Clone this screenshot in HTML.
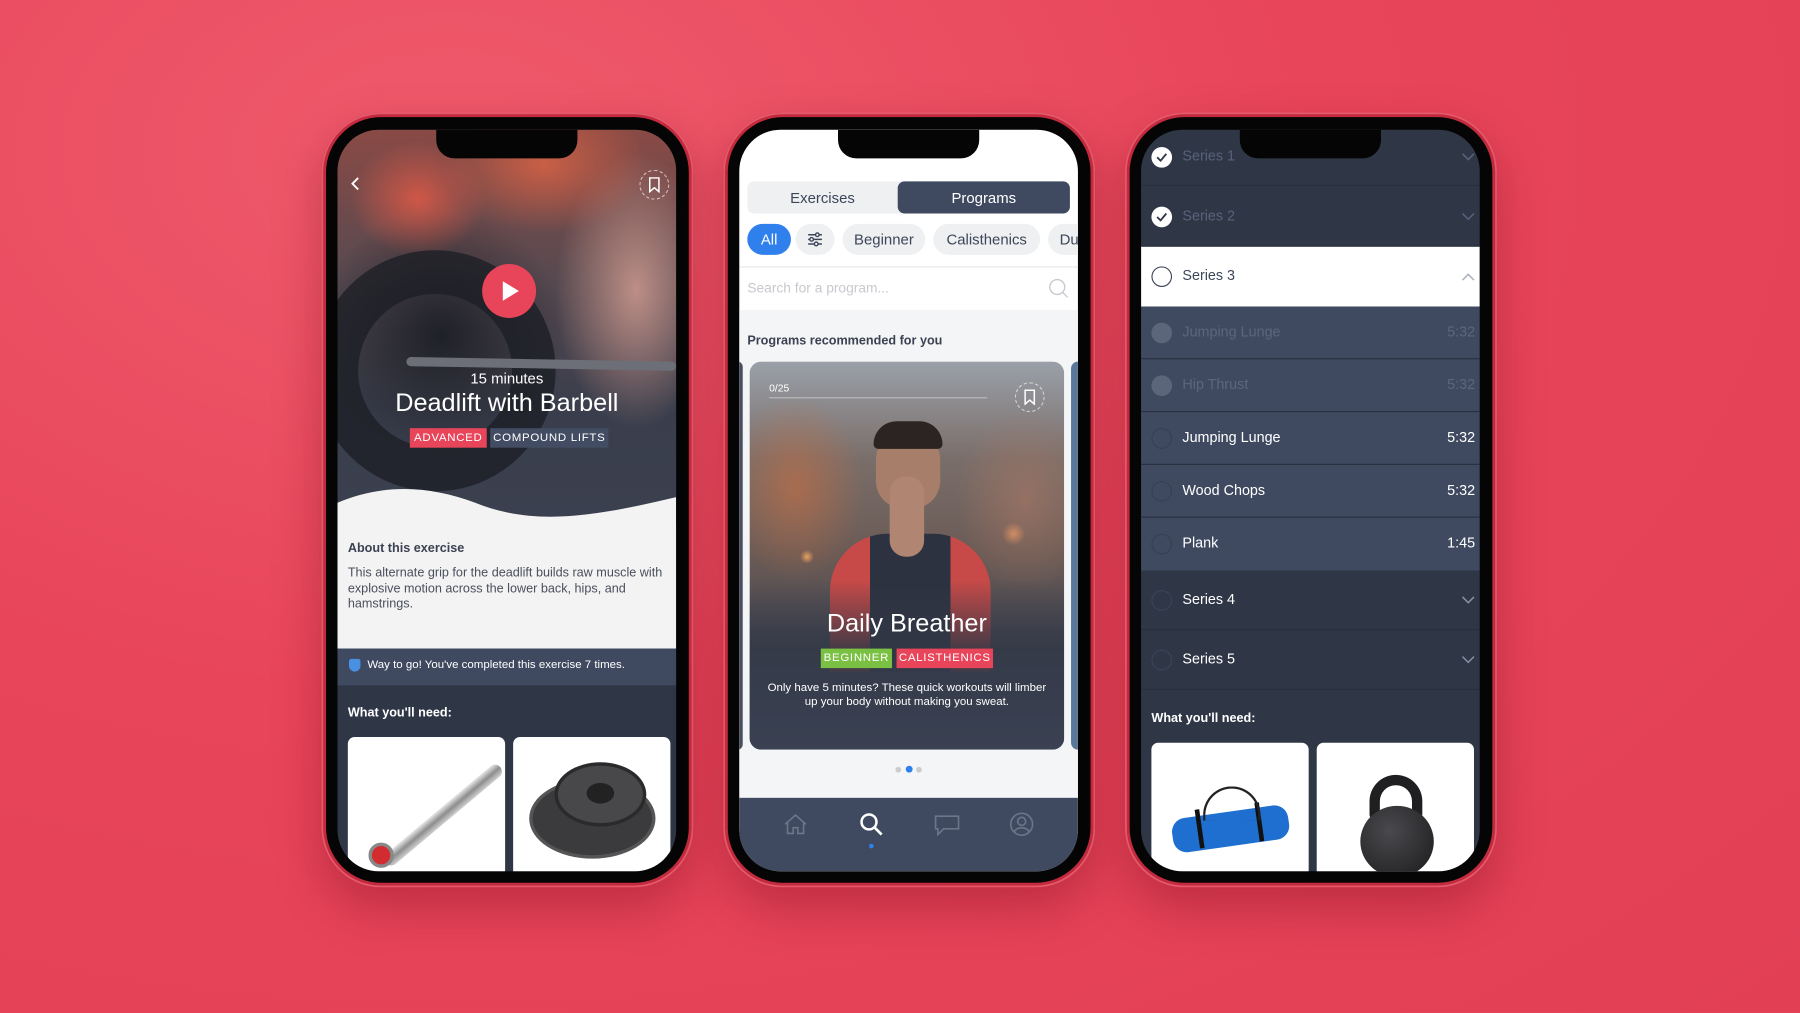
<!DOCTYPE html>
<html><head><meta charset="utf-8"><style>
*{margin:0;padding:0;box-sizing:border-box}
html,body{width:1800px;height:1013px;overflow:hidden;background:#e8435a}
body{font-family:"Liberation Sans",sans-serif}
#s{position:absolute;left:0;top:0;width:1568px;height:882px;transform:scale(1.14796);transform-origin:0 0;background:radial-gradient(ellipse at 25% 15%,#ef5a6c 0%,#e8455a 45%,#e23f55 100%)}
.a{position:absolute}
.phone{position:absolute;top:98px;width:324px;height:675px;border-radius:52px;background:#c42a3e;box-shadow:0 18px 40px rgba(120,10,30,.35), inset 0 0 0 1.5px #e4596b}
.bez{position:absolute;left:4px;top:4px;right:4px;bottom:4px;border-radius:48px;background:#050505}
.scr{position:absolute;left:14px;top:15px;width:295px;height:646px;border-radius:36px;overflow:hidden}
.notch{position:absolute;left:86px;top:0;width:123px;height:25px;background:#050505;border-radius:0 0 16px 16px;z-index:9}
.t{position:absolute;white-space:nowrap}
.tag{position:absolute;height:17px;font-size:10px;color:#fff;letter-spacing:.6px;text-align:center;line-height:17px}
.card{position:absolute;background:#fff;border-radius:6px;overflow:hidden}
.chip{position:absolute;top:82px;height:27px;border-radius:14px;background:#eef0f2;color:#3d4659;font-size:13px;text-align:center;line-height:27px}
.row{position:absolute;left:0;width:295px;border-bottom:1px solid #283040}
.circ{position:absolute;left:9px;width:18px;height:18px;border-radius:50%}
.rt{position:absolute;left:36px;font-size:12.5px}
.tm{position:absolute;right:4px;font-size:12.5px}
.chev{position:absolute;right:4px;width:12px;height:8px}
</style></head><body><div id="s">

<!-- PHONE 1 -->
<div class="phone" style="left:280px"><div class="bez"></div>
<div class="scr" style="background:#2f3747">
 <div class="notch"></div>
 <div class="a" style="left:0;top:0;width:295px;height:345px;background:
 radial-gradient(ellipse 60px 50px at 70px 60px,rgba(230,90,70,.8),transparent),
 radial-gradient(ellipse 90px 60px at 180px 30px,rgba(220,100,70,.8),transparent),
 radial-gradient(ellipse 70px 120px at 260px 140px,rgba(200,150,140,.9),transparent),
 radial-gradient(ellipse 110px 110px at 90px 180px,#1f2128,transparent),
 linear-gradient(180deg,#8a4a45 0%,#5a4a50 35%,#3a3e4c 70%,#3b4050 100%)"></div>
 <div class="a" style="left:-20px;top:105px;width:210px;height:210px;border-radius:50%;border:38px solid #1d1f25;opacity:.8"></div>
 <div class="a" style="left:60px;top:200px;width:235px;height:8px;background:#6c6f78;border-radius:4px;transform:rotate(1deg)"></div>
 <!-- wave -->
 <svg class="a" style="left:0;top:300px" width="295" height="60" viewBox="0 0 295 60"><path d="M0 25 C40 8 80 10 120 25 C170 45 220 38 295 20 L295 60 L0 60Z" fill="#f3f3f3"/></svg>
 <svg class="a" style="left:10px;top:40px" width="12" height="14"><path d="M8 2 L3 7 L8 12" stroke="#fff" stroke-width="1.6" fill="none"/></svg>
 <div class="a" style="left:263px;top:35px;width:26px;height:26px;border-radius:50%;border:1px dashed rgba(255,255,255,.6)"></div>
 <svg class="a" style="left:270px;top:41px" width="12" height="14"><path d="M2 1 H10 V13 L6 9.5 L2 13Z" stroke="#fff" stroke-width="1.3" fill="none"/></svg>
 <div class="a" style="left:126px;top:117px;width:47px;height:47px;border-radius:50%;background:#e8455a"></div>
 <svg class="a" style="left:143px;top:131px" width="16" height="19"><path d="M1 1 L15 9.5 L1 18Z" fill="#fff"/></svg>
 <div class="t" style="left:0;width:295px;text-align:center;top:209px;font-size:13px;color:#fff">15 minutes</div>
 <div class="t" style="left:0;width:295px;text-align:center;top:225px;font-size:22px;color:#fff">Deadlift with Barbell</div>
 <div class="tag" style="left:63px;top:260px;width:67px;background:#e8455a">ADVANCED</div>
 <div class="tag" style="left:133px;top:260px;width:103px;background:#424c62">COMPOUND LIFTS</div>
 <div class="a" style="left:0;top:345px;width:295px;height:107px;background:#f3f3f3"></div>
 <div class="t" style="left:9px;top:359px;font-size:11px;font-weight:bold;color:#3d4252">About this exercise</div>
 <div class="a" style="left:9px;top:380px;width:285px;font-size:11px;line-height:13.5px;color:#4a4f5c">This alternate grip for the deadlift builds raw muscle with explosive motion across the lower back, hips, and hamstrings.</div>
 <div class="a" style="left:0;top:452px;width:295px;height:32px;background:#3f4a60"></div>
 <div class="a" style="left:10px;top:461px;width:10px;height:11px;background:#4a90e2;border-radius:2px 2px 5px 5px"></div>
 <div class="t" style="left:26px;top:461px;font-size:10px;color:#fff">Way to go! You've completed this exercise 7 times.</div>
 <div class="t" style="left:9px;top:502px;font-size:11px;font-weight:bold;color:#fff">What you'll need:</div>
 <div class="card" style="left:9px;top:529px;width:137px;height:130px">
  <div class="a" style="left:18px;top:62px;width:130px;height:12px;background:linear-gradient(180deg,#e8e8e8,#8d8d8d,#d0d0d0);transform:rotate(-40deg);border-radius:6px"></div>
  <div class="a" style="left:18px;top:92px;width:22px;height:22px;border-radius:50%;background:#d22b30;border:3px solid #888"></div>
 </div>
 <div class="card" style="left:153px;top:529px;width:137px;height:130px">
  <div class="a" style="left:14px;top:36px;width:110px;height:70px;border-radius:50%;background:#3b3b3d;border:3px solid #555"></div>
  <div class="a" style="left:36px;top:22px;width:80px;height:56px;border-radius:50%;background:#48484b;border:3px solid #2a2a2c"></div>
  <div class="a" style="left:64px;top:40px;width:24px;height:18px;border-radius:50%;background:#222"></div>
 </div>
</div></div>

<!-- PHONE 2 -->
<div class="phone" style="left:630px"><div class="bez"></div>
<div class="scr" style="background:#fff">
 <div class="notch"></div>
 <div class="a" style="left:7px;top:45px;width:281px;height:28px;border-radius:6px;background:#eef0f2"></div>
 <div class="a" style="left:138px;top:45px;width:150px;height:28px;border-radius:6px;background:#3f4a60"></div>
 <div class="t" style="left:7px;width:131px;top:52px;text-align:center;font-size:13px;color:#3d4659">Exercises</div>
 <div class="t" style="left:138px;width:150px;top:52px;text-align:center;font-size:13px;color:#fff">Programs</div>
 <div class="chip" style="left:7px;width:38px;background:#2f80ed;color:#fff">All</div>
 <div class="chip" style="left:49px;width:34px"></div>
 <svg class="a" style="left:59px;top:89px" width="14" height="13"><g stroke="#3d4659" stroke-width="1.3"><path d="M1 2.5H13M1 6.5H13M1 10.5H13"/></g><g fill="#eef0f2" stroke="#3d4659" stroke-width="1.2"><circle cx="9" cy="2.5" r="1.6"/><circle cx="4" cy="6.5" r="1.6"/><circle cx="8" cy="10.5" r="1.6"/></g></svg>
 <div class="chip" style="left:90px;width:72px">Beginner</div>
 <div class="chip" style="left:169px;width:93px">Calisthenics</div>
 <div class="chip" style="left:269px;width:50px;text-align:left;padding-left:10px">Du</div>
 <div class="a" style="left:0;top:119px;width:295px;height:1px;background:#e6e7ea"></div>
 <div class="t" style="left:7px;top:131px;font-size:12px;color:#c7c9ce">Search for a program...</div>
 <svg class="a" style="left:269px;top:129px" width="18" height="18"><circle cx="8" cy="8" r="6.5" stroke="#c7c9ce" stroke-width="1.2" fill="none"/><path d="M13 13L17 17" stroke="#c7c9ce" stroke-width="1.2"/></svg>
 <div class="a" style="left:0;top:157px;width:295px;height:425px;background:#f4f5f6"></div>
 <div class="t" style="left:7px;top:178px;font-size:11px;font-weight:bold;color:#3d4252">Programs recommended for you</div>
 <div class="a" style="left:-6px;top:202px;width:9px;height:338px;border-radius:6px;background:#4a5060"></div>
 <div class="a" style="left:289px;top:202px;width:12px;height:338px;border-radius:6px;background:#5a7898"></div>
 <div class="a" style="left:9px;top:202px;width:274px;height:338px;border-radius:10px;overflow:hidden;background:
 radial-gradient(circle 6px at 50px 170px,#e8a060,transparent),
 radial-gradient(circle 10px at 230px 150px,rgba(230,150,100,.8),transparent),
 radial-gradient(ellipse 60px 80px at 40px 110px,rgba(190,110,70,.7),transparent),
 radial-gradient(ellipse 60px 80px at 240px 120px,rgba(170,120,100,.6),transparent),
 linear-gradient(180deg,#9aa0a8 0%,#7a6e6a 25%,#6a5a55 50%,#3e4452 80%,#384050 100%)">
  <div class="a" style="left:110px;top:58px;width:56px;height:70px;border-radius:28px 28px 24px 24px;background:#a67e6a"></div>
  <div class="a" style="left:108px;top:52px;width:60px;height:24px;border-radius:30px 30px 6px 6px;background:#2c2422"></div>
  <div class="a" style="left:70px;top:150px;width:140px;height:120px;border-radius:50px 50px 0 0;background:linear-gradient(90deg,#c84a48 0 25%,#2c3240 25% 75%,#c84a48 75%)"></div>
  <div class="a" style="left:122px;top:100px;width:30px;height:70px;border-radius:14px;background:#b08672"></div>
  <div class="a" style="left:0;top:190px;width:274px;height:148px;background:linear-gradient(180deg,transparent,rgba(50,56,70,.85) 40%,#3a4152)"></div>
  <div class="t" style="left:17px;top:18px;font-size:9px;color:#fff">0/25</div>
  <div class="a" style="left:17px;top:31px;width:190px;height:1px;background:rgba(255,255,255,.4)"></div>
  <div class="a" style="left:231px;top:18px;width:26px;height:26px;border-radius:50%;border:1px dashed rgba(255,255,255,.6)"></div>
  <svg class="a" style="left:238px;top:24px" width="12" height="14"><path d="M2 1 H10 V13 L6 9.5 L2 13Z" stroke="#fff" stroke-width="1.3" fill="none"/></svg>
  <div class="t" style="left:0;width:274px;text-align:center;top:215px;font-size:22px;color:#fff">Daily Breather</div>
  <div class="tag" style="left:62px;top:250px;width:62px;background:#7ac143">BEGINNER</div>
  <div class="tag" style="left:128px;top:250px;width:84px;background:#e8455a">CALISTHENICS</div>
  <div class="a" style="left:10px;top:279px;width:254px;text-align:center;font-size:10px;line-height:12px;color:#fff">Only have 5 minutes? These quick workouts will limber up your body without making you sweat.</div>
 </div>
 <div class="a" style="left:136px;top:555px;width:5px;height:5px;border-radius:50%;background:#ccc"></div>
 <div class="a" style="left:145px;top:554px;width:6px;height:6px;border-radius:50%;background:#2f80ed"></div>
 <div class="a" style="left:154px;top:555px;width:5px;height:5px;border-radius:50%;background:#ccc"></div>
 <div class="a" style="left:0;top:582px;width:295px;height:64px;background:#3f4a60"></div>
 <svg class="a" style="left:38px;top:595px" width="22" height="20"><path d="M2 10 L11 2 L20 10 M4 8.5 V18 H9 V13 H13 V18 H18 V8.5" stroke="#6c768a" stroke-width="1.4" fill="none"/></svg>
 <svg class="a" style="left:104px;top:594px" width="22" height="22"><circle cx="9" cy="9" r="6.5" stroke="#fff" stroke-width="2.2" fill="none"/><path d="M14 14L20 20" stroke="#fff" stroke-width="2.4"/></svg>
 <div class="a" style="left:113px;top:622px;width:4px;height:4px;border-radius:50%;background:#2f80ed"></div>
 <svg class="a" style="left:169px;top:596px" width="24" height="20"><path d="M2 2 H22 V13 H9 L4 18 V13 H2Z" stroke="#6c768a" stroke-width="1.4" fill="none"/></svg>
 <svg class="a" style="left:235px;top:594px" width="22" height="22"><circle cx="11" cy="11" r="9.5" stroke="#6c768a" stroke-width="1.4" fill="none"/><circle cx="11" cy="8.5" r="3.5" stroke="#6c768a" stroke-width="1.4" fill="none"/><path d="M4.5 17.5 C7 13 15 13 17.5 17.5" stroke="#6c768a" stroke-width="1.4" fill="none"/></svg>
</div></div>

<!-- PHONE 3 -->
<div class="phone" style="left:980px"><div class="bez"></div>
<div class="scr" style="background:#2f3747">
 <div class="notch"></div>
 <div class="row" style="top:0;height:49px">
  <div class="circ" style="top:15px;background:#fff"></div>
  <svg class="a" style="left:13px;top:20px" width="10" height="8"><path d="M1 4 L4 7 L9 1" stroke="#2f3747" stroke-width="1.6" fill="none"/></svg>
  <div class="rt" style="top:16px;color:#58627a">Series 1</div>
  <svg class="chev" style="top:20px"><path d="M1 1L6 6L11 1" stroke="#58627a" stroke-width="1.3" fill="none"/></svg>
 </div>
 <div class="row" style="top:49px;height:53px">
  <div class="circ" style="top:18px;background:#fff"></div>
  <svg class="a" style="left:13px;top:23px" width="10" height="8"><path d="M1 4 L4 7 L9 1" stroke="#2f3747" stroke-width="1.6" fill="none"/></svg>
  <div class="rt" style="top:19px;color:#58627a">Series 2</div>
  <svg class="chev" style="top:23px"><path d="M1 1L6 6L11 1" stroke="#58627a" stroke-width="1.3" fill="none"/></svg>
 </div>
 <div class="row" style="top:102px;height:52px;background:#fff;border:0">
  <div class="circ" style="top:17px;border:1.3px solid #3d4659"></div>
  <div class="rt" style="top:18px;color:#3d4659">Series 3</div>
  <svg class="chev" style="top:22px"><path d="M1 7L6 2L11 7" stroke="#aab0bb" stroke-width="1.3" fill="none"/></svg>
 </div>
 <div class="a" style="left:0;top:154px;width:295px;height:230px;background:#3f4a60"></div>
 <div class="row" style="top:154px;height:46px">
  <div class="circ" style="top:14px;background:#5c667b"></div>
  <div class="rt" style="top:15px;color:#5c667b">Jumping Lunge</div><div class="tm" style="top:15px;color:#5c667b">5:32</div></div>
 <div class="row" style="top:200px;height:46px">
  <div class="circ" style="top:14px;background:#5c667b"></div>
  <div class="rt" style="top:15px;color:#5c667b">Hip Thrust</div><div class="tm" style="top:15px;color:#5c667b">5:32</div></div>
 <div class="row" style="top:246px;height:46px">
  <div class="circ" style="top:14px;border:1px solid #354055"></div>
  <div class="rt" style="top:15px;color:#fff">Jumping Lunge</div><div class="tm" style="top:15px;color:#fff">5:32</div></div>
 <div class="row" style="top:292px;height:46px">
  <div class="circ" style="top:14px;border:1px solid #354055"></div>
  <div class="rt" style="top:15px;color:#fff">Wood Chops</div><div class="tm" style="top:15px;color:#fff">5:32</div></div>
 <div class="row" style="top:338px;height:46px;border:0">
  <div class="circ" style="top:14px;border:1px solid #354055"></div>
  <div class="rt" style="top:15px;color:#fff">Plank</div><div class="tm" style="top:15px;color:#fff">1:45</div></div>
 <div class="row" style="top:384px;height:52px">
  <div class="circ" style="top:17px;border:1px solid #3a4458"></div>
  <div class="rt" style="top:18px;color:#fff">Series 4</div>
  <svg class="chev" style="top:22px"><path d="M1 1L6 6L11 1" stroke="#8891a3" stroke-width="1.3" fill="none"/></svg></div>
 <div class="row" style="top:436px;height:52px">
  <div class="circ" style="top:17px;border:1px solid #3a4458"></div>
  <div class="rt" style="top:18px;color:#fff">Series 5</div>
  <svg class="chev" style="top:22px"><path d="M1 1L6 6L11 1" stroke="#8891a3" stroke-width="1.3" fill="none"/></svg></div>
 <div class="t" style="left:9px;top:507px;font-size:11px;font-weight:bold;color:#fff">What you'll need:</div>
 <div class="card" style="left:9px;top:534px;width:137px;height:125px">
  <div class="a" style="left:18px;top:60px;width:102px;height:30px;border-radius:12px;background:#1e6fd0;transform:rotate(-8deg)"></div>
  <div class="a" style="left:40px;top:58px;width:4px;height:34px;background:#111;transform:rotate(-8deg)"></div>
  <div class="a" style="left:92px;top:52px;width:4px;height:34px;background:#111;transform:rotate(-8deg)"></div>
  <div class="a" style="left:45px;top:38px;width:50px;height:30px;border:2px solid #222;border-bottom:0;border-radius:25px 25px 0 0"></div>
 </div>
 <div class="card" style="left:153px;top:534px;width:137px;height:125px">
  <div class="a" style="left:46px;top:28px;width:46px;height:40px;border:9px solid #1f1f22;border-radius:24px 24px 6px 6px"></div>
  <div class="a" style="left:38px;top:55px;width:64px;height:62px;border-radius:50%;background:radial-gradient(circle at 40% 35%,#4a4a4e,#1a1a1c)"></div>
 </div>
</div></div>

</div></body></html>
